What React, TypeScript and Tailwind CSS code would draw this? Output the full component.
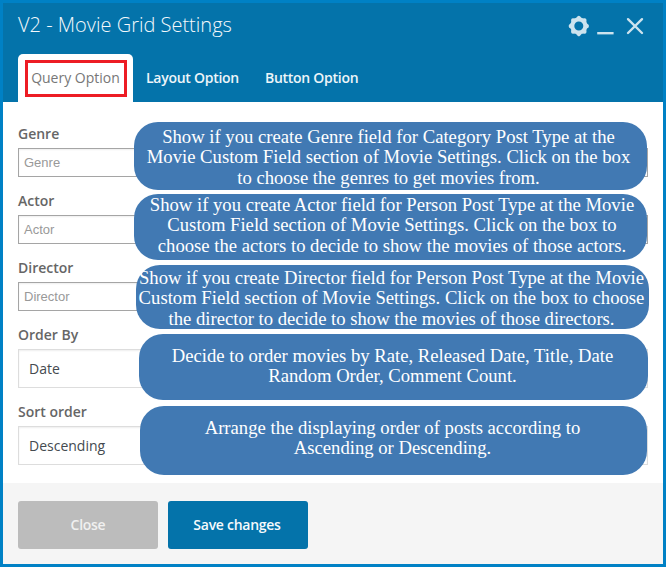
interface FieldProps {
  label: string;
  value: string;
  kind: "input" | "select";
  note: string[];
  noteClass: string;
}

const fields: FieldProps[] = [
  {
    label: "Genre",
    value: "Genre",
    kind: "input",
    note: [
      "Show if you create Genre field for Category Post Type at the",
      "Movie Custom Field section of Movie Settings. Click on the box",
      "to choose the genres to get movies from.",
    ],
    noteClass: "left-[116px] -top-[2px] w-[513px] h-[68px] pt-[5px] pr-[4px]",
  },
  {
    label: "Actor",
    value: "Actor",
    kind: "input",
    note: [
      "Show if you create Actor field for Person Post Type at the Movie",
      "Custom Field section of Movie Settings. Click on the box to",
      "choose the actors to decide to show the movies of those actors.",
    ],
    noteClass: "left-[116px] top-[3px] w-[513px] h-[66px] pt-px pl-[3px]",
  },
  {
    label: "Director",
    value: "Director",
    kind: "input",
    note: [
      "Show if you create Director field for Person Post Type at the Movie",
      "Custom Field section of Movie Settings. Click on the box to choose",
      "the director to decide to show the movies of those directors.",
    ],
    noteClass: "left-[118px] top-[7px] w-[513px] h-[64px] pt-[3px] pr-[2px]",
  },
  {
    label: "Order By",
    value: "Date",
    kind: "select",
    note: [
      "Decide to order movies by Rate, Released Date, Title, Date",
      "Random Order, Comment Count.",
    ],
    noteClass: "left-[121px] top-[9px] w-[509px] h-[66px] pt-[12px] pr-[2px]",
  },
  {
    label: "Sort order",
    value: "Descending",
    kind: "select",
    note: [
      "Arrange the displaying order of posts according to",
      "Ascending or Descending.",
    ],
    noteClass: "left-[122px] top-[4px] w-[507px] h-[69px] pt-[12px] pr-[2px]",
  },
];

function Field({ label, value, kind, note, noteClass }: FieldProps) {
  return (
    <div className="relative">
      <div className="flex h-6 items-center pb-[5px] text-[14px] font-semibold text-[#666]">
        {label}
      </div>
      {kind === "input" ? (
        <div className="flex h-[29px] items-center border border-[#a5a5a5] pl-[5px] font-['Liberation_Sans',Arial,sans-serif] text-[13px] text-[#999] shadow-[inset_0_1px_2px_rgba(0,0,0,0.07)]">
          {value}
        </div>
      ) : (
        <div className="flex h-[39px] items-center border border-[#dddddd] pl-[10px] text-[14px] text-[#444a50] shadow-[inset_0_1px_2px_rgba(0,0,0,0.07)]">
          {value}
        </div>
      )}
      <div
        className={`absolute z-10 rounded-[24px] bg-[#4179b3] text-center font-['Liberation_Serif','Times_New_Roman',serif] text-[18.67px] leading-[20.4px] whitespace-nowrap text-white ${noteClass}`}
      >
        {note.map((line) => (
          <div key={line}>{line}</div>
        ))}
      </div>
    </div>
  );
}

export default function App() {
  return (
    <div className="flex h-[567px] w-[666px] flex-col overflow-hidden border-[3px] border-[#0081c5] bg-white font-['Open_Sans',sans-serif]">
      <header className="flex h-[99px] flex-col justify-between bg-[#0473aa] pl-[15px]">
        <div className="flex items-start justify-between pr-[3px]">
          <h1 className="pt-[7px] text-[20px] leading-[30px] font-light text-[#f4f9fc]">
            V2 - Movie Grid Settings
          </h1>
          <svg width="98" height="46" viewBox="562 3 98 46" className="text-[#cde3ee]">
            <g fill="currentColor">
              <circle cx="578.8" cy="26" r="6.5" fill="none" stroke="currentColor" strokeWidth="4" />
              {[0, 45, 90, 135, 180, 225, 270, 315].map((a) => (
                <path
                  key={a}
                  d="M575.6 18.6L577.6 16.3Q578.8 15.3 580 16.3L582 18.6Z"
                  transform={`rotate(${a} 578.8 26)`}
                />
              ))}
            </g>
            <path d="M597.2 33.2H613.6" stroke="currentColor" strokeWidth="2.4" />
            <path
              d="M628 19.2L642 33M642 19.2L628 33"
              stroke="currentColor"
              strokeWidth="2.4"
              strokeLinecap="round"
            />
          </svg>
        </div>
        <nav className="flex h-12 text-[14px] font-semibold tracking-[-0.27px] text-[#edf5f9]">
          <div className="flex w-[115px] justify-center rounded-t-[5px] bg-white pt-[6px]">
            <div className="flex h-[37px] w-[102px] items-center justify-center border-[3px] border-[#ed1c24] pb-[2px] font-normal tracking-normal whitespace-nowrap text-[#777]">
              Query Option
            </div>
          </div>
          <div className="pt-[14px] pl-[13px] leading-5">Layout Option</div>
          <div className="pt-[14px] pl-[26px] leading-5">Button Option</div>
        </nav>
      </header>

      <main className="flex h-[381px] flex-col gap-[14px] px-[15px] pt-[22px]">
        {fields.map((f) => (
          <Field key={f.label} {...f} />
        ))}
      </main>

      <footer className="flex flex-1 gap-[10px] bg-[#f5f5f5] px-[15px] pt-[18px] text-[14px] font-semibold tracking-[-0.27px]">
        <button className="h-12 w-[140px] rounded-[3px] bg-[#bcbcbc] pb-[2px] text-[#f0f0f0]">
          Close
        </button>
        <button className="h-12 w-[140px] rounded-[3px] bg-[#0473aa] pb-[2px] pr-[2px] text-[#f5fafc]">
          Save changes
        </button>
      </footer>
    </div>
  );
}
